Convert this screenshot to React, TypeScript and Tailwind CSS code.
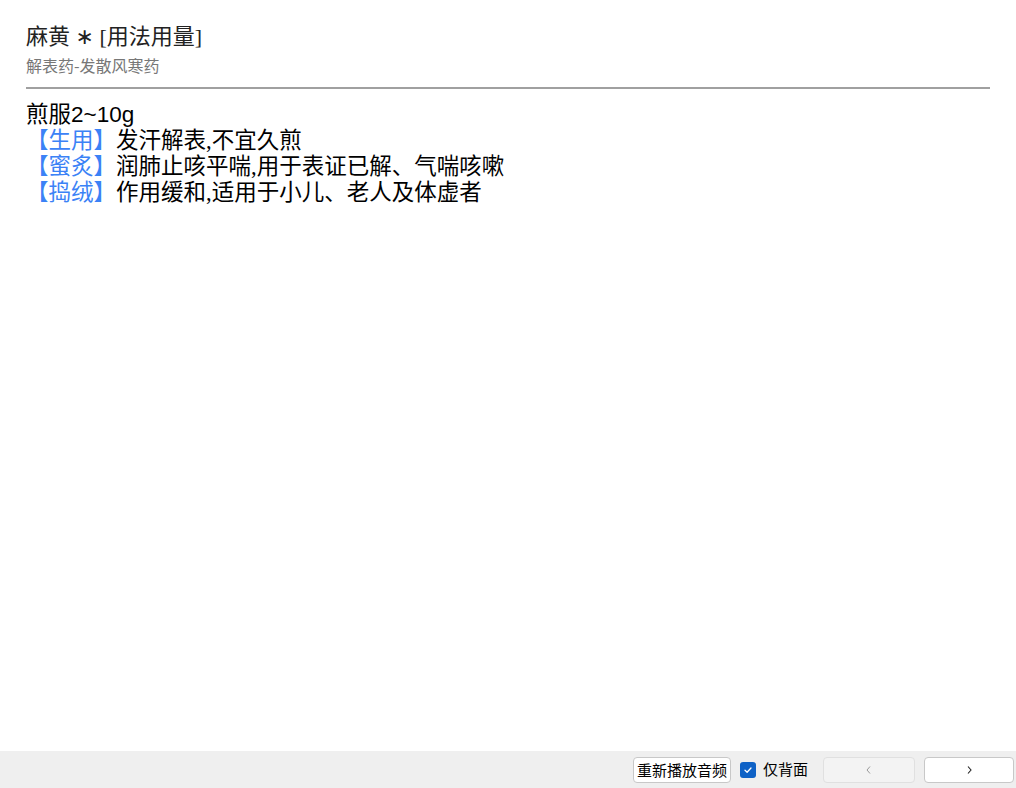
import React from 'react'

const uses = [
  { tag: '生用', text: '发汗解表,不宜久煎' },
  { tag: '蜜炙', text: '润肺止咳平喘,用于表证已解、气喘咳嗽' },
  { tag: '捣绒', text: '作用缓和,适用于小儿、老人及体虚者' },
]

const serif = { fontFamily: '"Liberation Serif", "Noto Sans CJK SC", serif' }

export default function App() {
  return (
    <div className="w-[1016px] h-[788px] flex flex-col bg-white overflow-hidden">
      {/* card content */}
      <div className="flex-1 px-[26px] pt-[22px]">
        <div className="text-[22px] leading-[30px] text-[#222]" style={serif}>
          麻黄 <span className="font-['DejaVu_Sans',sans-serif] text-[22px]">∗</span> [用法用量]
        </div>
        <div className="text-[16px] leading-[20px] text-[#777] mt-[3px] font-['Noto_Sans_CJK_SC',sans-serif]">
          解表药-发散风寒药
        </div>
        <div className="h-[2px] bg-[#a0a0a0] mt-[12px]" />
        <div className="mt-[13px] text-[22.5px] leading-[26px] text-black" style={serif}>
          <div>
            煎服<span className="font-['Liberation_Sans',sans-serif]">2~10g</span>
          </div>
          {uses.map((u) => (
            <div key={u.tag}>
              <span className="text-[#3b82f6]">【{u.tag}】</span>
              {u.text}
            </div>
          ))}
        </div>
      </div>

      {/* bottom bar */}
      <div className="h-[37px] bg-[#efefef] flex items-center justify-end gap-[9px] pr-[2px] font-['Noto_Sans_CJK_SC',sans-serif] text-[15px] text-black">
        <button className="h-[26px] px-[3px] bg-white border border-[#c8c8c8] rounded-[4px] leading-none">
          重新播放音频
        </button>
        <label className="flex items-center gap-[7px] mr-[6px]">
          <span className="w-[16px] h-[16px] rounded-[3px] bg-[#0f62c6] flex items-center justify-center">
            <svg width="10" height="10" viewBox="0 0 10 10" fill="none">
              <path d="M2 5.2 L4.1 7.2 L8 3" stroke="white" strokeWidth="1.3" strokeLinecap="round" strokeLinejoin="round" />
            </svg>
          </span>
          仅背面
        </label>
        <button className="w-[92px] h-[26px] bg-[#f3f3f3] border border-[#e0e0e0] rounded-[4px] flex items-center justify-center">
          <svg width="8" height="10" viewBox="0 0 8 10" fill="none">
            <path d="M5 1.5 L2 5 L5 8.5" stroke="#999" strokeWidth="1" />
          </svg>
        </button>
        <button className="w-[90px] h-[26px] bg-white border border-[#c8c8c8] rounded-[4px] flex items-center justify-center">
          <svg width="8" height="10" viewBox="0 0 8 10" fill="none">
            <path d="M3 1.5 L6 5 L3 8.5" stroke="#222" strokeWidth="1.1" />
          </svg>
        </button>
      </div>
    </div>
  )
}
